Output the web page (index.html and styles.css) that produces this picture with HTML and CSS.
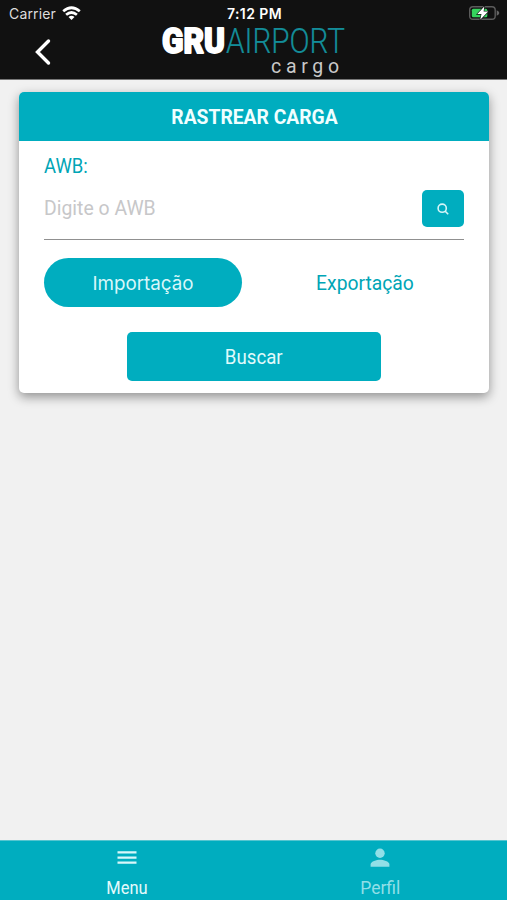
FILE: index.html
```
<!DOCTYPE html>
<html lang="pt-BR">
<head>
<meta charset="utf-8">
<title>GRU Airport Cargo</title>
<link rel="stylesheet" href="styles.css">
</head>
<body>
<div class="app">
  <header class="header">
    <div class="status">
      <div class="carrier"><span>Carrier</span>
        <svg width="19" height="15" viewBox="0 0 19 15" fill="none" stroke="#fff" stroke-width="2.7"><path d="M1.2 5.2Q9.5-1.7 17.8 5.2M4.1 8.8Q9.5 4.2 14.9 8.8"/><path d="M6.5 11Q9.5 8.7 12.5 11L9.5 14Z" fill="#fff" stroke="none"/></svg>
      </div>
      <time>7:12 PM</time>
      <svg class="battery" width="32" height="16" viewBox="0 0 32 16"><rect x="1.7" y="1.7" width="25.5" height="12.6" rx="3.3" fill="none" stroke="#5c5c5c" stroke-width="1.4"/><path d="M28.7 5.3Q31.3 6.3 31.3 8T28.7 10.7Z" fill="#656565"/><rect x="3.8" y="3.8" width="15.5" height="8.5" rx="1.5" fill="#35d35d"/><path d="M16.3 1.5 9.3 9.1h4.2L12.2 14.8l8-8.2h-4.6Z" fill="#fff" stroke="#111" stroke-width="1.2" paint-order="stroke"/></svg>
    </div>
    <div class="brandbar">
      <svg class="back" width="18" height="28" viewBox="0 0 18 28" fill="none" stroke="#fff" stroke-width="3.4" stroke-linecap="round"><path d="M14.5 3 3.5 14l11 11"/></svg>
      <svg class="logo" width="190" height="54" viewBox="0 0 190 54">
        <text class="gru" x="2" y="27" textLength="63" lengthAdjust="spacingAndGlyphs">GRU</text>
        <text class="airport" x="66" y="27" textLength="119" lengthAdjust="spacingAndGlyphs">AIRPORT</text>
        <text class="cargo" x="111" y="47" textLength="68">cargo</text>
      </svg>
    </div>
  </header>
  <main class="content">
    <section class="card">
      <h1 class="title"><span>RASTREAR CARGA</span></h1>
      <div class="form">
        <div class="label"><span>AWB:</span></div>
        <div class="field">
          <div class="placeholder">Digite o AWB</div>
          <div class="search"><svg width="12" height="12" viewBox="0 0 12 12" fill="none" stroke="#d5f5f8" stroke-width="1.6"><circle cx="5.2" cy="5.2" r="4.1"/><path d="M8 8 11.2 11.2"/></svg></div>
        </div>
        <div class="tabs">
          <div class="tab active">Importação</div>
          <div class="tab"><span>Exportação</span></div>
        </div>
        <div class="submit"><span>Buscar</span></div>
      </div>
    </section>
  </main>
  <nav class="nav">
    <div class="item">
      <svg width="20" height="20" viewBox="0 0 20 20"><path d="M.5 4.4h19M.5 9.6h19M.5 14.7h19" stroke="#d9f7fa" stroke-width="2.3"/></svg>
      <span class="menu">Menu</span>
    </div>
    <div class="item muted">
      <svg width="20" height="20" viewBox="0 0 20 20" fill="#91dfe7"><circle cx="10" cy="5.2" r="4.7"/><path d="M.6 18.7v-2.2c0-3.1 6.2-4.7 9.4-4.7s9.4 1.6 9.4 4.7v2.2Z"/></svg>
      <span class="profile">Perfil</span>
    </div>
  </nav>
</div>
</body>
</html>
```
FILE: styles.css
```
* { box-sizing: border-box; }
body { margin: 0; background: #f1f1f1; font-family: Roboto, "Liberation Sans", sans-serif; }
.app { width: 507px; height: 900px; display: flex; flex-direction: column; overflow: hidden; }
.header { height: 80px; flex: none; background: #111; border-bottom: 1px solid #777; }
.status { height: 26px; padding: 0 7px 0 9px; display: grid; grid-template-columns: 1fr auto 1fr; align-items: center; color: #fff; font: 14px Inter, sans-serif; }
.carrier { display: flex; align-items: center; gap: 6px; color: #ddd; letter-spacing: .15px; }
.status time { font-weight: 600; font-size: 14px; letter-spacing: .4px; }
.battery { justify-self: end; }
.brandbar { height: 52px; padding-left: 34px; display: flex; }
.back { margin-top: 12px; }
.logo { margin-left: 108px; overflow: visible; }
.gru { font: 900 34.5px Roboto, sans-serif; fill: #fff; stroke: #fff; stroke-width: 1.8; stroke-linejoin: round; }
.airport { font: 300 35px Roboto, sans-serif; fill: #138d99; stroke: #138d99; stroke-width: .2; }
.cargo { font: 19.5px Roboto, sans-serif; fill: #c9c9c9; }
.content { flex: 1; padding: 11.5px 18px 0 19px; }
.card { height: 301px; background: #fff; border-radius: 5px; box-shadow: 0 4px 11px rgba(0,0,0,.4); }
.title { margin: 0; height: 49px; display: flex; align-items: center; justify-content: center; border-radius: 5px 5px 0 0; background: #00adbf; color: #f0ffff; font-size: 20.5px; font-weight: 700; padding-top: 2px; }
.title span, .label span, .tab span, .submit span, .item span { display: inline-block; transform: scaleX(.94); }
.form { padding: 12px 25px 0; color: #00a5b6; font-size: 20.5px; }
.label { height: 27px; line-height: 27px; }
.label span { transform: scaleX(.9); transform-origin: left; }
.field { height: 60px; display: flex; justify-content: space-between; border-bottom: 1px solid #909090; }
.placeholder { line-height: 57px; color: #c7c7c9; font-size: 20px; transform: scaleX(.97); transform-origin: left; }
.search { width: 42px; height: 37px; margin-top: 10px; display: flex; align-items: center; justify-content: center; padding-top: 2px; background: #00adbf; border-radius: 5px; }
.tabs { display: flex; margin-top: 18.5px; }
.tab { height: 49px; width: 198px; margin-right: 24px; flex: none; display: flex; align-items: center; justify-content: center; padding-top: 1px; }
.tab + .tab { margin: 0; width: 198px; }
.active { background: #00adbf; color: #d8f7fa; border-radius: 25px; font: 18.8px Inter, sans-serif; }
.submit { width: 254px; height: 49px; margin: 24.5px auto 0; display: flex; align-items: center; justify-content: center; padding-top: 2px; background: #00adbf; color: #e0fafb; border-radius: 5px; }
.submit span { transform: scaleX(.91); }
.nav { height: 60px; flex: none; display: grid; grid-template-columns: 1fr 1fr; background: #00adbf; border-top: 1px solid #55c5d0; }
.item { display: flex; flex-direction: column; align-items: center; padding-top: 7px; color: #e4fafb; font-size: 17.5px; line-height: 22px; gap: 9px; }
.muted { color: #91dfe7; }
.muted .profile { transform: none; }
```
